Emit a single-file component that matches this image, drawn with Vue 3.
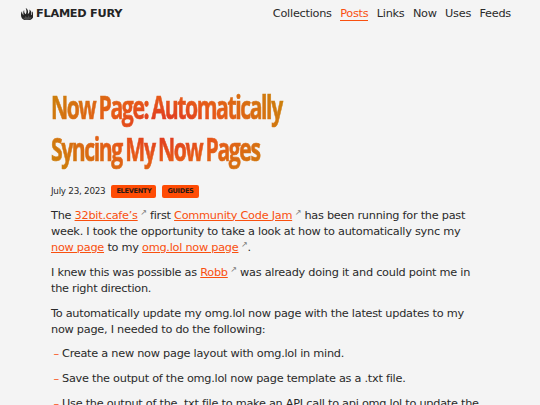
<template>
  <div class="page">
    <header class="site-header">
      <a class="brand" href="#">
        <svg class="flame" viewBox="0 0 24 24" aria-hidden="true">
          <path
            d="M9 0c5 3 5 6 4 12 3-2 4-5 3-9 4 3 5 6 3 11 2-1 3-4 2-8 2 2 3 4 3 8 0 6-5 10-12 10S0 20 0 14c0-3 0-5 2-8 0 4 1 6 3 8-1-4-1-8 1-10 0 4 1 7 3 8 2-3 2-7 0-12z"
            fill="#242424"
          />
          <path d="M12 23c-4 0-7-2-8-5 2 1 4 1 4-1l1-2c1 2 2 3 3 3 2-1 2-2 2-4 2 1 2 3 2 4l4-1c0 4-3 6-8 6z" fill="#4c4c4c" />
        </svg>
        <span>FLAMED FURY</span>
      </a>
      <nav class="menu">
        <a v-for="item in menu" :key="item" href="#" :class="{ active: item === 'Posts' }">{{ item }}</a>
      </nav>
    </header>

    <main class="post">
      <h1>
        <span class="first">Now Page: Automatically</span>
        <span class="second">Syncing My Now Pages</span>
      </h1>
      <div class="meta">
        <time>July 23, 2023</time>
        <a v-for="tag in tags" :key="tag" class="tag" href="#">{{ tag }}</a>
      </div>
      <p>
        The <a href="#" class="external">32bit.cafe’s</a> first
        <a href="#" class="external">Community Code Jam</a> has been running for the past<br />
        week. I took the opportunity to take a look at how to automatically sync my<br />
        <a href="#">now page</a> to my <a href="#" class="external">omg.lol now page</a>.
      </p>
      <p>
        I knew this was possible as <a href="#" class="external">Robb</a> was already doing it and could point me in<br />
        the right direction.
      </p>
      <p>
        To automatically update my omg.lol now page with the latest updates to my<br />
        now page, I needed to do the following:
      </p>
      <ul>
        <li v-for="step in steps" :key="step">{{ step }}</li>
      </ul>
    </main>
  </div>
</template>

<script setup>
const menu = ['Collections', 'Posts', 'Links', 'Now', 'Uses', 'Feeds']
const tags = ['ELEVENTY', 'GUIDES']
const steps = [
  'Create a new now page layout with omg.lol in mind.',
  'Save the output of the omg.lol now page template as a .txt file.',
  'Use the output of the .txt file to make an API call to api.omg.lol to update the'
]
</script>

<style>
body {
  background: #f4f4f4;
  overflow: hidden;
}
</style>

<style scoped>
.page {
  height: 405px;
  overflow: hidden;
  background: #f4f4f4;
  color: #2a2a2a;
  font-family: "DejaVu Sans", sans-serif;
  font-size: 11.3px;
  letter-spacing: -0.26px;
  line-height: 16.2px;
}

.site-header {
  display: flex;
  justify-content: space-between;
  align-items: center;
  height: 28px;
  padding: 0 29px 0 20.5px;
}

.brand {
  display: flex;
  align-items: center;
  gap: 3px;
  color: #242424;
  font-weight: bold;
  text-decoration: none;
}

.flame {
  width: 12.5px;
  height: 12.5px;
}

.menu {
  display: flex;
  gap: 8.4px;
}

.menu a {
  color: #2a2a2a;
  line-height: 13px;
  text-decoration: none;
  border-bottom: 1px solid transparent;
}

.menu a.active {
  color: #f9500f;
  border-color: #f9500f;
}

.post {
  padding: 58px 51px 0;
}

h1 {
  width: 231px;
  height: 84px;
  margin: 0 0 14px;
  font-family: "Open Sans", sans-serif;
  font-size: 33px;
  font-weight: 700;
  letter-spacing: -2.2px;
  word-spacing: -1px;
  line-height: 42px;
}

h1 span {
  display: block;
  width: max-content;
  padding-right: 3px;
  transform: scaleX(0.641);
  transform-origin: 0 50%;
  color: transparent;
  background-clip: text;
  -webkit-text-stroke: 0.7px transparent;
}

.first {
  background-image: radial-gradient(ellipse 54% 170% at 49% 100%, #de3023, #e65a18 45%, #cc7f0c);
}

.second {
  background-image: radial-gradient(ellipse 60% 170% at 54% 0%, #de3023, #e65a18 45%, #cc7f0c);
}

.meta {
  display: flex;
  align-items: center;
  height: 15px;
  margin-bottom: 8.5px;
  font-size: 8.8px;
}

.tag {
  height: 13px;
  margin-left: 6px;
  padding: 0 5px;
  border-radius: 2px;
  background: #ff4c05;
  color: #2a1a14;
  font-size: 6.6px;
  font-weight: bold;
  letter-spacing: -0.32px;
  line-height: 13px;
  text-decoration: none;
}

p {
  margin: 0 0 8.5px;
  white-space: nowrap;
}

p a {
  color: #f9500f;
  text-decoration: underline;
}

.external::after {
  content: "↗";
  display: inline-block;
  margin-left: 2.5px;
  color: #777;
  font-size: 8px;
  line-height: 7px;
  vertical-align: 4px;
}

ul {
  margin: 0;
  padding: 0 0 0 11px;
  list-style: none;
  white-space: nowrap;
}

li {
  margin-bottom: 8.5px;
}

li::before {
  content: "–";
  display: inline-block;
  width: 8.5px;
  margin-left: -8.5px;
  color: #f9500f;
}
</style>
